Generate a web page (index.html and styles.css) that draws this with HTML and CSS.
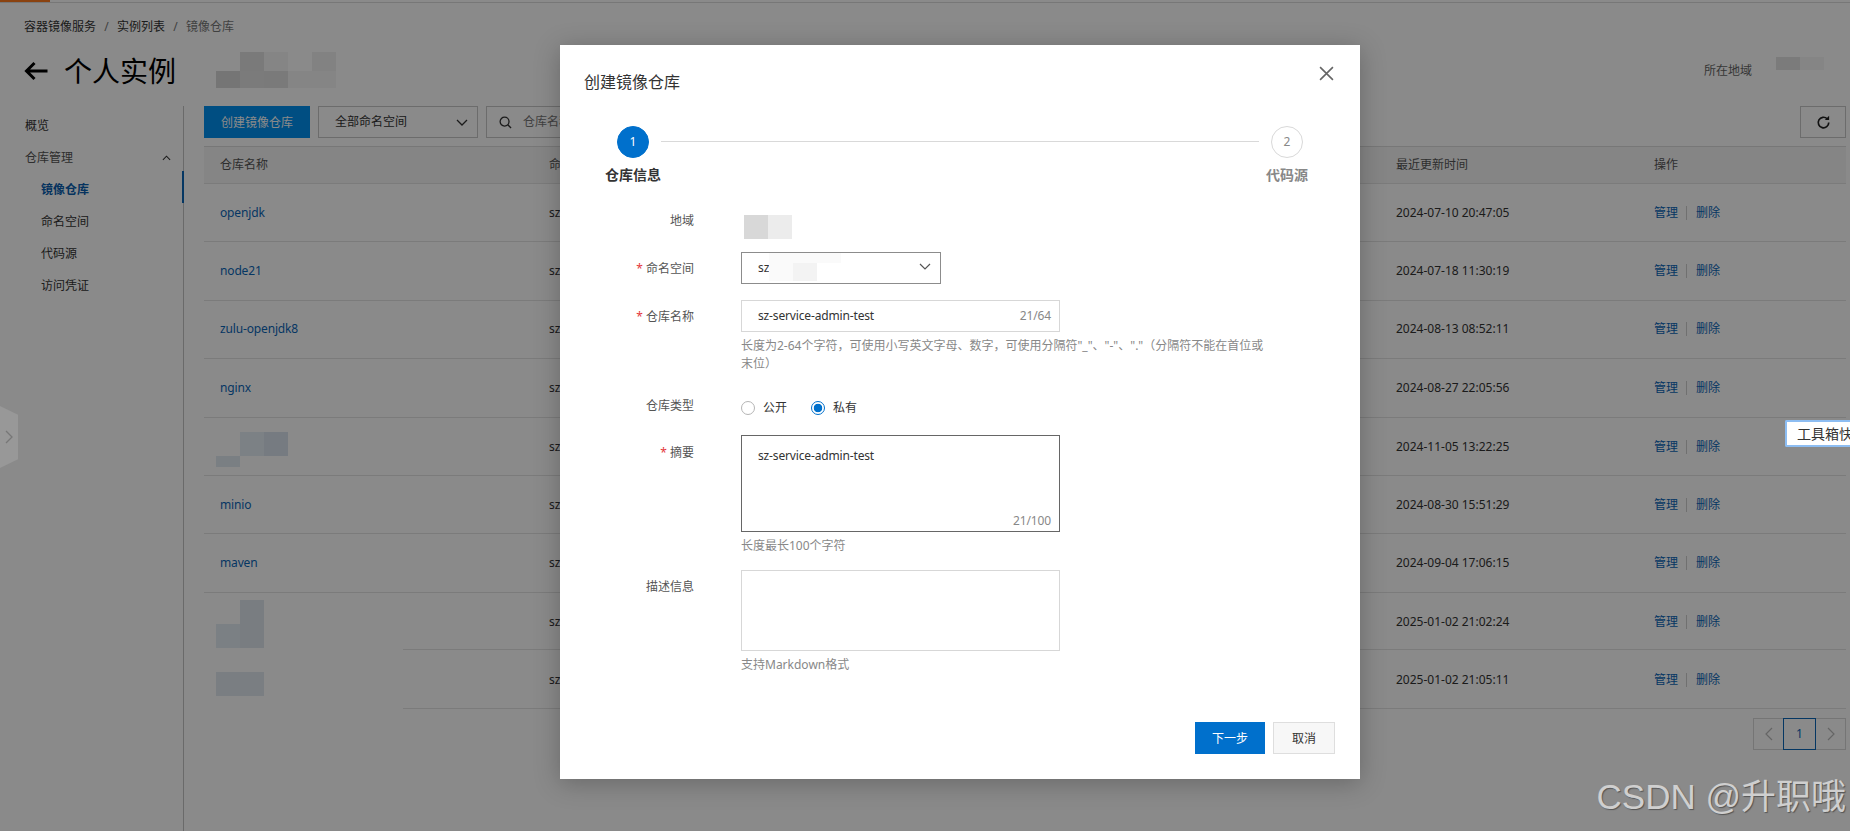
FILE: index.html
```html
<!DOCTYPE html>
<html lang="zh-CN">
<head>
    <meta charset="UTF-8">
    <meta name="viewport" content="width=device-width, initial-scale=1.0">
    <title>创建镜像仓库</title>
    <link rel="stylesheet" href="styles.css">
</head>
<body>
    <div class="topbar"><span class="topbar-accent"></span></div>

    <nav class="breadcrumb">
        <span>容器镜像服务</span><i>/</i><span>实例列表</span><i>/</i><span class="breadcrumb-current">镜像仓库</span>
    </nav>

    <header class="page-head">
        <svg class="back" viewBox="0 0 24 20" width="24" height="20"><path d="M23.5 10H3M10.5 2l-8 8 8 8" fill="none" stroke="#000" stroke-width="3"/></svg>
        <h1 class="page-title">个人实例</h1>
        <svg class="blur-title" width="143" height="36">
            <rect x="47" y="0" width="24" height="19" fill="#e2e2e2"/>
            <rect x="71" y="0" width="24" height="19" fill="#f5f5f5"/>
            <rect x="119" y="0" width="24" height="19" fill="#f1f1f1"/>
            <rect x="23" y="19" width="24" height="17" fill="#d9d9d9"/>
            <rect x="47" y="19" width="24" height="17" fill="#e4e4e4"/>
            <rect x="71" y="19" width="24" height="17" fill="#e2e2e2"/>
            <rect x="95" y="19" width="48" height="17" fill="#f6f6f6"/>
        </svg>
        <div class="region">
            <span>所在地域</span>
            <svg class="blur-region" width="66" height="13">
                <rect width="24" height="13" fill="#e4e4e4"/>
                <rect x="24" width="24" height="13" fill="#f5f5f5"/>
            </svg>
        </div>
    </header>

    <div class="page-body">
        <aside class="sidebar">
            <div class="side-item">概览</div>
            <div class="side-item side-group">仓库管理
                <svg viewBox="0 0 10 6" width="9" height="6"><path d="M1 5l4-4 4 4" fill="none" stroke="#333" stroke-width="1.2"/></svg>
            </div>
            <div class="side-item side-sub side-active">镜像仓库</div>
            <div class="side-item side-sub">命名空间</div>
            <div class="side-item side-sub">代码源</div>
            <div class="side-item side-sub">访问凭证</div>
        </aside>

        <main class="content">
            <div class="toolbar">
                <button class="btn-create">创建镜像仓库</button>
                <div class="filter">全部命名空间
                    <svg viewBox="0 0 12 7" width="12" height="7"><path d="M1 1l5 5 5-5" fill="none" stroke="#333" stroke-width="1.3"/></svg>
                </div>
                <div class="search">
                    <svg viewBox="0 0 14 14" width="13" height="13"><circle cx="6" cy="6" r="4.8" fill="none" stroke="#333" stroke-width="1.4"/><path d="M9.5 9.5l3.5 3.5" stroke="#333" stroke-width="1.4"/></svg>
                    <span>仓库名称</span>
                </div>
                <button class="btn-refresh">
                    <svg viewBox="0 0 16 16" width="15" height="15"><path d="M13.6 8a5.6 5.6 0 1 1-1.7-4" fill="none" stroke="#222" stroke-width="1.8"/><path d="M14 .8v4.6H9.4z" fill="#222"/></svg>
                </button>
            </div>

            <div class="table">
                <div class="row row-head"><div>仓库名称</div><div>命名空间</div><div>最近更新时间</div><div>操作</div></div>

                <div class="row">
                    <div><a class="link">openjdk</a></div><div>sz</div><div>2024-07-10 20:47:05</div>
                    <div class="ops"><a class="link">管理</a><a class="link">删除</a></div>
                </div>
                <div class="row">
                    <div><a class="link">node21</a></div><div>sz</div><div>2024-07-18 11:30:19</div>
                    <div class="ops"><a class="link">管理</a><a class="link">删除</a></div>
                </div>
                <div class="row">
                    <div><a class="link">zulu-openjdk8</a></div><div>sz</div><div>2024-08-13 08:52:11</div>
                    <div class="ops"><a class="link">管理</a><a class="link">删除</a></div>
                </div>
                <div class="row">
                    <div><a class="link">nginx</a></div><div>sz</div><div>2024-08-27 22:05:56</div>
                    <div class="ops"><a class="link">管理</a><a class="link">删除</a></div>
                </div>
                <div class="row">
                    <div><svg class="blur-name" width="72" height="58">
                        <rect x="24" y="14" width="24" height="24" fill="#e6eef6"/>
                        <rect x="48" y="14" width="24" height="24" fill="#dbe4ee"/>
                        <rect y="38" width="24" height="11" fill="#e2eaf3"/>
                    </svg></div><div>sz</div><div>2024-11-05 13:22:25</div>
                    <div class="ops"><a class="link">管理</a><a class="link">删除</a></div>
                </div>
                <div class="row">
                    <div><a class="link">minio</a></div><div>sz</div><div>2024-08-30 15:51:29</div>
                    <div class="ops"><a class="link">管理</a><a class="link">删除</a></div>
                </div>
                <div class="row">
                    <div><a class="link">maven</a></div><div>sz</div><div>2024-09-04 17:06:15</div>
                    <div class="ops"><a class="link">管理</a><a class="link">删除</a></div>
                </div>
                <div class="row row-hidden-line">
                    <div><svg class="blur-name" width="72" height="58">
                        <rect x="24" y="7" width="24" height="48" fill="#dfe7ef"/>
                        <rect y="31" width="24" height="24" fill="#e4ecf4"/>
                    </svg></div><div>sz</div><div>2025-01-02 21:02:24</div>
                    <div class="ops"><a class="link">管理</a><a class="link">删除</a></div>
                </div>
                <div class="row row-hidden-line">
                    <div><svg class="blur-name" width="72" height="58">
                        <rect y="21" width="48" height="24" fill="#e2e9f1"/>
                    </svg></div><div>sz</div><div>2025-01-02 21:05:11</div>
                    <div class="ops"><a class="link">管理</a><a class="link">删除</a></div>
                </div>
            </div>

            <div class="pager">
                <span class="page-arrow"><svg viewBox="0 0 8 14" width="8" height="14"><path d="M7 1L1 7l6 6" fill="none" stroke="#bbb" stroke-width="1.2"/></svg></span>
                <span class="page-num">1</span>
                <span class="page-arrow"><svg viewBox="0 0 8 14" width="8" height="14"><path d="M1 1l6 6-6 6" fill="none" stroke="#bbb" stroke-width="1.2"/></svg></span>
            </div>
        </main>
    </div>

    <div class="mask"></div>

    <div class="side-tab">
        <svg viewBox="0 0 8 14" width="8" height="14"><path d="M1 1l6 6-6 6" fill="none" stroke="#777" stroke-width="1.3"/></svg>
    </div>

    <div class="tool-tip">工具箱快捷键</div>

    <section class="dialog">
        <div class="dialog-head">
            <h2 class="dialog-title">创建镜像仓库</h2>
            <svg class="dialog-close" viewBox="0 0 14 14" width="15" height="15"><path d="M1 1l12 12M13 1L1 13" fill="none" stroke="#666" stroke-width="1.5"/></svg>
        </div>

        <div class="steps">
            <div class="step step-on">
                <span class="step-dot">1</span>
                <span class="step-name">仓库信息</span>
            </div>
            <div class="step-line"></div>
            <div class="step">
                <span class="step-dot">2</span>
                <span class="step-name">代码源</span>
            </div>
        </div>

        <form class="form">
            <div class="form-row row-region">
                <label class="form-label">地域</label>
                <svg class="blur-field" width="72" height="24">
                    <rect width="24" height="24" fill="#d8d8d8"/>
                    <rect x="24" width="24" height="24" fill="#ececec"/>
                </svg>
            </div>
            <div class="form-row row-ns">
                <label class="form-label required">命名空间</label>
                <div class="select">
                    <span>sz</span>
                    <svg class="blur-select" width="72" height="30">
                        <rect width="72" height="10" fill="#fafafa"/>
                        <rect y="10" width="24" height="18" fill="#fafafa"/>
                        <rect x="24" y="10" width="24" height="18" fill="#f3f3f3"/>
                    </svg>
                    <svg class="select-arrow" viewBox="0 0 12 7" width="12" height="7"><path d="M1 1l5 5 5-5" fill="none" stroke="#555" stroke-width="1.2"/></svg>
                </div>
            </div>
            <div class="form-row row-name">
                <label class="form-label required">仓库名称</label>
                <div class="field">
                    <div class="input"><span>sz-service-admin-test</span><span class="count">21/64</span></div>
                    <p class="help">长度为2-64个字符，可使用小写英文字母、数字，可使用分隔符"_"、"-"、"."（分隔符不能在首位或<br>末位）</p>
                </div>
            </div>
            <div class="form-row row-type">
                <label class="form-label">仓库类型</label>
                <div class="radios">
                    <span class="radio"><i class="radio-dot"></i>公开</span>
                    <span class="radio"><i class="radio-dot radio-checked"></i>私有</span>
                </div>
            </div>
            <div class="form-row row-summary">
                <label class="form-label required">摘要</label>
                <div class="field">
                    <div class="textarea textarea-focus"><span>sz-service-admin-test</span><span class="count">21/100</span></div>
                    <p class="help">长度最长100个字符</p>
                </div>
            </div>
            <div class="form-row row-desc">
                <label class="form-label">描述信息</label>
                <div class="field">
                    <div class="textarea textarea-empty"></div>
                    <p class="help">支持Markdown格式</p>
                </div>
            </div>
        </form>

        <div class="dialog-foot">
            <button class="btn-next">下一步</button>
            <button class="btn-cancel">取消</button>
        </div>
    </section>

    <div class="watermark">CSDN @升职哦</div>
</body>
</html>
```

FILE: styles.css
```css
* {
    box-sizing: border-box;
}

html, body {
    height: 100%;
}

body {
    margin: 0;
    height: 831px;
    overflow: hidden;
    position: relative;
    display: flex;
    flex-direction: column;
    background: #fff;
    color: #333;
    font-family: "Noto Sans", "Noto Sans CJK SC", sans-serif;
    font-size: 12px;
    line-height: 18px;
}

button {
    font-family: inherit;
    font-size: 12px;
    cursor: pointer;
}

svg {
    display: block;
    flex: none;
}

/* page under the mask */
.topbar {
    height: 3px;
    flex: none;
    border-bottom: 1px solid #ddd;
}

.topbar-accent {
    display: block;
    width: 50px;
    height: 2px;
    background: #ff7a1f;
}

.breadcrumb {
    display: flex;
    align-items: center;
    height: 18px;
    margin: 15px 0 0 24px;
    color: #333;
}

.breadcrumb i {
    width: 21px;
    text-align: center;
    font-style: normal;
    color: #777;
}

.breadcrumb-current {
    color: #777;
}

.page-head {
    display: flex;
    align-items: center;
    height: 36px;
    margin-top: 17px;
    padding: 0 8px 0 24px;
}

.back {
    margin-right: 16px;
}

.page-title {
    margin: 0;
    font-size: 28px;
    font-weight: 400;
    line-height: 36px;
    color: #000;
    width: 129px;
}

.blur-title {
    margin-top: -2px;
}

.region {
    margin-left: auto;
    display: flex;
    align-items: center;
    gap: 24px;
    color: #666;
}

.blur-region {
    margin-top: -15px;
}

.page-body {
    display: flex;
    flex: 1;
    margin-top: 17px;
}

.sidebar {
    width: 184px;
    flex: none;
    padding-top: 4px;
    border-right: 1px solid #c4c4c4;
}

.side-item {
    height: 32px;
    display: flex;
    align-items: center;
    padding-left: 25px;
    color: #333;
}

.side-group {
    justify-content: space-between;
    padding-right: 12px;
    color: #555;
}

.side-sub {
    padding-left: 41px;
}

.side-active {
    position: relative;
    color: #0a5fb0;
    font-weight: 700;
}

/* the bar sits a little higher than the text of the item */
.side-active::after {
    content: "";
    position: absolute;
    right: -1px;
    top: -3px;
    width: 2px;
    height: 32px;
    background: #0a66b8;
}

.content {
    flex: 1;
    padding: 0 4px 0 20px;
}

.toolbar {
    display: flex;
    gap: 8px;
    height: 32px;
}

.btn-create {
    width: 106px;
    border: 0;
    background: #0090f0;
    color: #fff;
}

.filter {
    width: 160px;
    display: flex;
    align-items: center;
    justify-content: space-between;
    padding: 0 9px 0 16px;
    border: 1px solid #c8c8c8;
}

.search {
    width: 500px;
    display: flex;
    align-items: center;
    gap: 11px;
    padding-left: 12px;
    border: 1px solid #c8c8c8;
    color: #777;
}

.btn-refresh {
    margin-left: auto;
    width: 46px;
    display: flex;
    align-items: center;
    justify-content: center;
    padding: 0;
    background: #fff;
    border: 1px solid #c8c8c8;
}

.table {
    margin-top: 8px;
    border-top: 1px solid #dcdcdc;
}

.row {
    display: grid;
    grid-template-columns: 329px 847px 258px 208px;
    height: 58.4px;
    border-bottom: 1px solid #e4e4e4;
    align-items: center;
    color: #333;
}

.row > div {
    padding-left: 16px;
}

.row-head {
    height: 37px;
    background: #f6f6f6;
    color: #555;
}

/* the pixelated patch in the last two rows also hid the left part of the line */
.row-hidden-line {
    border-bottom-color: transparent;
    background: linear-gradient(#e4e4e4, #e4e4e4) 199px 100% / 100% 1px no-repeat;
}

.link {
    color: #0a66b8;
    letter-spacing: -0.15px;
}

.blur-name {
    margin-left: -4px;
}

.ops {
    display: flex;
    align-items: center;
}

.ops .link {
    letter-spacing: 0;
    line-height: 14px;
}

.ops .link + .link {
    margin-left: 8px;
    padding-left: 9px;
    border-left: 1px solid #d0d0d0;
}

.pager {
    display: flex;
    justify-content: flex-end;
    margin-top: 8px;
    height: 32px;
}

.page-arrow {
    width: 31px;
    display: flex;
    align-items: center;
    justify-content: center;
    border: 1px solid #d8d8d8;
}

.page-num {
    width: 33px;
    margin: 0 -1px;
    position: relative;
    display: flex;
    align-items: center;
    justify-content: center;
    border: 1px solid #0a66b8;
    color: #0a66b8;
}

.mask {
    position: absolute;
    inset: 0;
    background: rgba(0, 0, 0, 0.46);
}

.side-tab {
    position: absolute;
    left: 0;
    top: 406px;
    width: 18px;
    height: 62px;
    display: flex;
    align-items: center;
    padding-left: 5px;
    background: #989898;
    clip-path: polygon(0 0, 100% 14%, 100% 86%, 0 100%);
}

.tool-tip {
    position: absolute;
    left: 1785px;
    top: 420px;
    width: 65px;
    height: 27px;
    padding-left: 10px;
    overflow: hidden;
    white-space: nowrap;
    background: #fff;
    border: 2px solid #8dbdf2;
    border-right: 0;
    border-radius: 2px 0 0 2px;
    font-size: 14px;
    line-height: 23px;
}

.watermark {
    position: absolute;
    right: 4px;
    top: 778px;
    font-family: "Liberation Sans", "Noto Sans CJK SC", sans-serif;
    font-size: 35px;
    line-height: 38px;
    white-space: nowrap;
    color: #cfcfcf;
    text-shadow: 1px 1px 1px #555;
}

/* dialog */
.dialog {
    position: absolute;
    left: 560px;
    top: 45px;
    width: 800px;
    height: 734px;
    display: flex;
    flex-direction: column;
    background: #fff;
    box-shadow: 0 4px 24px rgba(0, 0, 0, 0.25);
}

.dialog-head {
    display: flex;
    justify-content: space-between;
    padding: 21px 26px 0 24px;
}

.dialog-title {
    margin: 4px 0 0;
    font-size: 16px;
    font-weight: 400;
    line-height: 24px;
}

.steps {
    display: flex;
    margin: 32px 52px 0 45px;
}

.step {
    display: flex;
    flex-direction: column;
    align-items: center;
    color: #888;
}

.step-on {
    color: #333;
}

.step-dot {
    width: 32px;
    height: 32px;
    border-radius: 50%;
    display: flex;
    align-items: center;
    justify-content: center;
    border: 1px solid #d9d9d9;
    font-size: 12px;
}

.step-on .step-dot {
    background: #0070cc;
    border-color: #0070cc;
    color: #fff;
}

.step-name {
    margin-top: 7px;
    font-size: 14px;
    font-weight: 700;
    line-height: 20px;
}

.step-line {
    flex: 1;
    height: 1px;
    margin: 15px 7px 0 0;
    background: #d9d9d9;
}

.form {
    margin-top: 26px;
}

.form-row {
    display: grid;
    grid-template-columns: 110px 1fr;
    column-gap: 47px;
    padding-left: 24px;
}

.form-label {
    position: relative;
    top: 1px;
    text-align: right;
    color: #555;
}

.required::before {
    content: "*";
    margin-right: 3px;
    color: #e4393c;
}

.row-region {
    margin-bottom: 13px;
}

.blur-field {
    margin: 4px 0 0 3px;
}

.row-ns {
    margin-bottom: 16px;
}

.row-ns .form-label,
.row-name .form-label,
.row-desc .form-label {
    padding-top: 7px;
}

.select {
    width: 200px;
    height: 32px;
    display: flex;
    align-items: center;
    padding: 0 9px 0 16px;
    border: 1px solid #8c8c8c;
}

.blur-select {
    margin-left: 0;
}

.select-arrow {
    margin-left: auto;
    margin-top: -3px;
}

.input {
    width: 319px;
    height: 32px;
    display: flex;
    align-items: center;
    justify-content: space-between;
    padding: 0 8px 0 16px;
    border: 1px solid #d7d7d7;
    letter-spacing: -0.15px;
}

.count {
    color: #888;
}

.help {
    margin: 5px 0 0;
    color: #888;
    white-space: nowrap;
}

.row-name {
    margin-bottom: 23px;
}

.row-type {
    margin-bottom: 18px;
}

.radios {
    display: flex;
    gap: 24px;
    margin-top: 3px;
}

.radio {
    display: flex;
    align-items: center;
    gap: 8px;
}

.radio-dot {
    width: 14px;
    height: 14px;
    border-radius: 50%;
    border: 1px solid #b5b5b5;
}

.radio-checked {
    border-color: #0070cc;
    background: radial-gradient(circle, #0070cc 0 4px, #fff 4.6px);
}

.row-summary {
    margin-bottom: 15px;
}

.row-summary .form-label {
    padding-top: 8px;
}

.textarea {
    width: 319px;
    display: flex;
    flex-direction: column;
    justify-content: space-between;
    border: 1px solid #d7d7d7;
    letter-spacing: -0.15px;
}

.textarea-focus {
    height: 97px;
    padding: 11px 8px 1px 16px;
    border-color: #666;
}

.textarea-focus .count {
    align-self: flex-end;
}

.textarea-empty {
    height: 81px;
}

.dialog-foot {
    margin-top: auto;
    display: flex;
    justify-content: flex-end;
    gap: 8px;
    padding: 0 25px 25px 0;
}

.btn-next {
    width: 70px;
    height: 32px;
    border: 0;
    background: #0070cc;
    color: #fff;
}

.btn-cancel {
    width: 62px;
    height: 32px;
    border: 1px solid #dedede;
    background: #f7f7f7;
    color: #333;
}
```
